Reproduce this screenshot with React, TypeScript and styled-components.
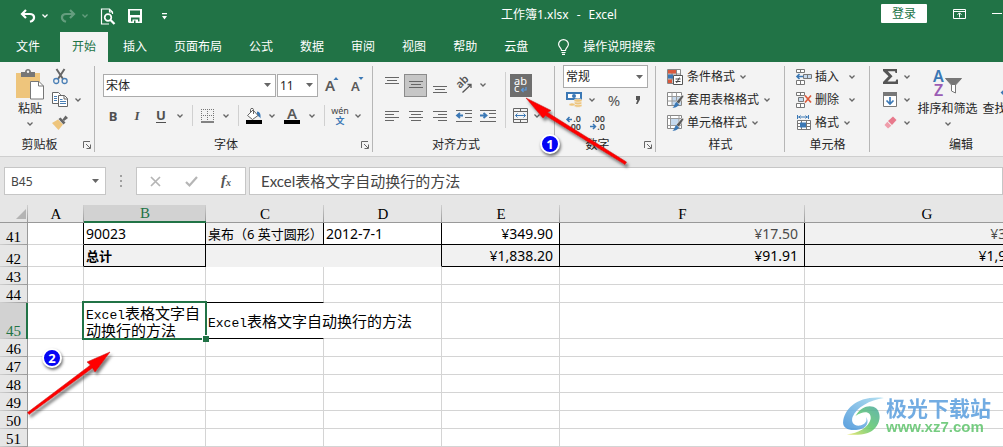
import React from "react";
import styled, { createGlobalStyle, css } from "styled-components";

const GREEN = "#217346";
const UI = `"Noto Sans", "Noto Sans CJK SC", sans-serif`;
const SONG = `"Liberation Serif", "Noto Sans CJK SC", serif`;

const GlobalStyle = createGlobalStyle`
  * { box-sizing: border-box; }
  body { margin: 0; background: #fff; font-family: ${UI}; font-size: 12px; color: #262626; }
  button, input, select { font: inherit; color: inherit; margin: 0; }
  svg { overflow: visible; }
`;

const Page = styled.main`
  position: relative;
  min-height: 100vh;
  overflow: hidden;
`;

/* ---------- title bar and tabs ---------- */

const TitleBar = styled.header`
  display: flex;
  align-items: center;
  height: 32px;
  background: ${GREEN};
  color: #fff;
`;

const QuickAccess = styled.div`
  display: flex;
  align-items: center;
  gap: 6px;
  flex: 0 0 501px;
  padding-left: 18px;
`;

const Split = styled.span`
  display: flex;
  align-items: center;
`;

const Btn = styled.button<{ $w?: number; $h?: number; $dim?: boolean }>`
  display: flex;
  flex: none;
  align-items: center;
  justify-content: center;
  width: ${(p) => p.$w ?? 24}px;
  height: ${(p) => p.$h ?? 22}px;
  padding: 0;
  border: 0;
  background: none;
  opacity: ${(p) => (p.$dim ? 0.3 : 1)};
`;

const Title = styled.h1`
  display: flex;
  gap: 8px;
  margin: 0;
  font-size: 12px;
  font-weight: 400;
  line-height: 30px;
  height: 32px;
  white-space: nowrap;
`;

const WindowTools = styled.div`
  display: flex;
  align-items: flex-start;
  height: 32px;
  padding-top: 4px;
  margin-left: auto;
`;

const SignIn = styled.button`
  width: 46px;
  height: 19px;
  padding: 0;
  border: 0;
  border-radius: 1px;
  background: #fff;
  color: ${GREEN};
  line-height: 19px;
`;

const Tabs = styled.nav`
  display: flex;
  gap: 3px;
  height: 30px;
  padding-left: 4px;
  background: ${GREEN};
`;

const Tab = styled.button<{ $active?: boolean; $file?: boolean }>`
  flex: none;
  padding: 0 12px;
  margin-right: ${(p) => (p.$file ? 5 : 0)}px;
  border: 0;
  background: ${(p) => (p.$active ? "#f3f3f3" : "none")};
  color: ${(p) => (p.$active ? GREEN : "#fff")};
  line-height: 28px;
  white-space: nowrap;
`;

const TellMe = styled.button`
  display: flex;
  align-items: center;
  gap: 14px;
  margin-left: 15px;
  padding: 0;
  border: 0;
  background: none;
  color: #fff;
  line-height: 28px;
  white-space: nowrap;
`;

/* ---------- ribbon ---------- */

const Ribbon = styled.section`
  display: flex;
  padding-top: 3px;
  background: #f3f3f3;
  border-bottom: 1px solid #cfcfcf;
  overflow: hidden;
`;

const GroupBox = styled.div<{ $w: number }>`
  display: flex;
  flex: none;
  flex-direction: column;
  width: ${(p) => p.$w}px;
  background: linear-gradient(#b6b6b6, #b6b6b6) right 0 top 1px / 1px calc(100% - 5px) no-repeat;
`;

const GroupBody = styled.div<{ $pad?: number }>`
  display: flex;
  height: 69px;
  padding-left: ${(p) => p.$pad ?? 0}px;
`;

const GroupFooter = styled.div`
  display: flex;
  align-items: center;
  height: 22px;
  line-height: 22px;
  white-space: nowrap;
`;

const GroupName = styled.span`
  flex: 1;
  text-align: center;
`;

const Stack = styled.div<{ $top?: number; $gap?: number }>`
  display: flex;
  flex-direction: column;
  gap: ${(p) => p.$gap ?? 0}px;
  padding-top: ${(p) => p.$top ?? 0}px;
`;

const Row = styled.div<{ $h?: number }>`
  display: flex;
  align-items: center;
  height: ${(p) => p.$h ?? 23}px;
`;

const FontRow = styled(Row)`
  height: 24px;
  padding-left: 2px;
  gap: 1px;
`;

const Divider = styled.span<{ $tall?: boolean }>`
  width: 10px;
  height: ${(p) => (p.$tall ? 56 : 21)}px;
  background: linear-gradient(#d0d0d0, #d0d0d0) center / 1px 100% no-repeat;
`;

const Tall = styled.button<{ $w: number }>`
  display: flex;
  flex: none;
  flex-direction: column;
  align-items: center;
  width: ${(p) => p.$w}px;
  height: 69px;
  padding: 4px 0 0;
  border: 0;
  background: none;
  line-height: 18px;
  white-space: nowrap;
`;

const TallIcon = styled.span`
  display: flex;
  height: 31px;
`;

const TallArrow = styled.span`
  display: flex;
  margin-top: 4px;
`;

const Toggle = styled(Btn)<{ $dark?: boolean }>`
  height: 23px;
  ${(p) =>
    p.$dark
      ? css`background: #6e6e6e;`
      : css`background: #c6c6c6; border: 1px solid #8b8b8b;`}
`;

const Command = styled.button`
  display: flex;
  align-items: center;
  gap: 3px;
  height: 23px;
  padding: 0;
  border: 0;
  background: none;
  line-height: 20px;
  white-space: nowrap;
`;

const CommandText = styled.span<{ $w?: number }>`
  min-width: ${(p) => p.$w ?? 0}px;
  margin-right: 2px;
  text-align: left;
`;

const ComboBox = styled.label<{ $w: number }>`
  display: grid;
  align-items: center;
  width: ${(p) => p.$w}px;
  height: 23px;
  border: 1px solid #ababab;
  background: #fff;
  > * { grid-area: 1 / 1; }
  > svg { justify-self: end; margin-right: 4px; pointer-events: none; }
`;

const Select = styled.select`
  width: 100%;
  height: 21px;
  padding: 0 2px;
  border: 0;
  background: none;
  appearance: none;
  outline: none;
`;

const Letter = styled.span<{ $italic?: boolean; $under?: boolean }>`
  font-size: 13px;
  font-weight: 700;
  line-height: 14px;
  color: #505050;
  font-style: ${(p) => (p.$italic ? "italic" : "normal")};
  font-family: ${(p) => (p.$italic ? `"Liberation Serif", serif` : UI)};
  border-bottom: ${(p) => (p.$under ? "1px solid #505050" : "0")};
`;

const BigGlyph = styled.span`
  font-size: 15px;
  line-height: 20px;
  color: #555;
`;

const EditTools = styled.div`
  display: flex;
  padding-left: 3px;
`;

const SideBtn = styled(Btn)`
  margin-left: -10px;
`;

/* ---------- formula bar ---------- */

const FormulaBar = styled.section`
  display: flex;
  align-items: center;
  height: 48px;
  padding: 0 0 0 4px;
  background: #e6e6e6;
`;

const Field = styled.div<{ $w?: number }>`
  display: flex;
  align-items: center;
  flex: ${(p) => (p.$w ? "none" : "1")};
  width: ${(p) => (p.$w ? p.$w + "px" : "auto")};
  height: 28px;
  border: 1px solid #c6c6c6;
  background: #fff;
`;

const TextInput = styled.input<{ $big?: boolean }>`
  flex: 1;
  min-width: 0;
  height: 26px;
  padding: 0 0 ${(p) => (p.$big ? 2 : 0)}px ${(p) => (p.$big ? 11 : 6)}px;
  border: 0;
  outline: 0;
  background: none;
  font-family: ${(p) => (p.$big ? `Lato, "Noto Sans CJK SC", sans-serif` : UI)};
  font-size: ${(p) => (p.$big ? 15 : 12)}px;
  color: #444;
`;

const Grip = styled.span`
  display: flex;
  justify-content: center;
  width: 30px;
`;

const FormulaGap = styled.span`
  width: 3px;
`;

/* ---------- sheet ---------- */

const SheetArea = styled.section`
  overflow: hidden;
`;

const Sheet = styled.table`
  width: 1049px;
  table-layout: fixed;
  border-collapse: separate;
  border-spacing: 0;
  color: #000;
`;

const ColHead = styled.th<{ $active?: boolean }>`
  height: 18px;
  padding: ${(p) => (p.$active ? 1 : 2)}px 0 0;
  border-bottom: ${(p) => (p.$active ? `2px solid ${GREEN}` : "1px solid #999")};
  background: linear-gradient(#cfcfcf, #999) right / 1px 100% no-repeat, ${(p) => (p.$active ? "#d2d2d2" : "#e6e6e6")};
  color: ${(p) => (p.$active ? GREEN : "#000")};
  font: 400 15px/15px ${SONG};
`;

const Corner = styled.th`
  padding: 0 2px 3px 0;
  border-bottom: 1px solid #999;
  background: linear-gradient(#cfcfcf, #999) right / 1px 100% no-repeat, #e6e6e6;
  vertical-align: bottom;
  svg { display: block; margin-left: auto; }
`;

const RowHead = styled.th<{ $h: number; $active?: boolean }>`
  height: ${(p) => p.$h}px;
  padding: 0 ${(p) => (p.$active ? 5 : 6)}px 0 0;
  border-right: ${(p) => (p.$active ? `2px solid ${GREEN}` : "1px solid #999")};
  background: linear-gradient(90deg, #cfcfcf, #999) bottom / 100% 1px no-repeat, ${(p) => (p.$active ? "#d2d2d2" : "#e6e6e6")};
  color: ${(p) => (p.$active ? GREEN : "#000")};
  font: 400 15px/15px ${SONG};
  text-align: right;
  vertical-align: bottom;
`;

type CellProps = { $fill?: boolean; $right?: string; $bottom?: string; $num?: boolean; $grey?: boolean };
const Cell = styled.td<CellProps>`
  position: relative;
  padding: 0 ${(p) => (p.$num ? 6 : 0)}px 0 2px;
  border-right: 1px solid ${(p) => p.$right ?? "#d4d4d4"};
  border-bottom: 1px solid ${(p) => p.$bottom ?? "#d4d4d4"};
  background: ${(p) => (p.$fill ? "#f1f1f1" : "#fff")};
  color: ${(p) => (p.$grey ? "#4a4a4a" : "#000")};
  font-size: 14px;
  line-height: 16px;
  text-align: ${(p) => (p.$num ? "right" : "left")};
  white-space: nowrap;
`;

const Cjk = styled.span<{ $bold?: boolean }>`
  font-size: 13px;
  font-weight: ${(p) => (p.$bold ? 700 : 400)};
`;

const SongText = styled.span<{ $wrap?: boolean }>`
  display: block;
  position: relative;
  z-index: 1;
  font: 15px/17px "Noto Sans CJK SC", sans-serif;
  white-space: ${(p) => (p.$wrap ? "normal" : "nowrap")};
`;

const Mono = styled.span`
  font-family: "Liberation Mono", monospace;
  font-size: 13px;
  line-height: 0;
`;

const Selection = styled.span`
  position: absolute;
  z-index: 2;
  inset: -2px;
  border: 2px solid ${GREEN};
  pointer-events: none;
  &::after {
    content: "";
    position: absolute;
    right: -4px;
    bottom: -4px;
    width: 6px;
    height: 6px;
    background: ${GREEN};
    border: solid #fff;
    border-width: 1px 0 0 1px;
  }
`;

const SelectedCell = styled(Cell)`
  z-index: 1;
`;

/* ---------- overlays ---------- */

const Marks = styled.svg`
  position: absolute;
  left: 0;
  top: 0;
  pointer-events: none;
`;

const Badge = styled.span<{ $x: number; $y: number }>`
  position: absolute;
  left: ${(p) => p.$x}px;
  top: ${(p) => p.$y}px;
  width: 20px;
  height: 20px;
  border: 2px solid #fff;
  border-radius: 50%;
  background: #0505f5;
  box-shadow: 1px 2px 3px rgba(0, 0, 0, 0.55);
  color: #fff;
  font: 700 13px/16px ${UI};
  text-align: center;
`;

const Watermark = styled.div`
  position: absolute;
  right: 12px;
  bottom: 8px;
  display: flex;
  align-items: center;
  opacity: 0.85;
`;

const WatermarkText = styled.div`
  color: #5a9ede;
  font: 700 21px/24px "Noto Sans CJK SC", sans-serif;
`;

const WatermarkUrl = styled.div`
  padding-bottom: 4px;
  color: #5fc46c;
  font: 700 15px/16px "Liberation Sans", sans-serif;
`;

/* ---------- icons ---------- */

const Chevron = ({ color = "#666" }: { color?: string }) => (
  <svg width="6" height="4" viewBox="0 0 6 4" fill="none" stroke={color} strokeWidth="1.3">
    <path d="M.5 .5 3 3 5.500 .5" />
  </svg>
);

const Caret = () => (
  <svg width="7" height="4" viewBox="0 0 7 4"><path d="M0 0h7L3.500 4z" fill="#666" /></svg>
);

const More = ({ w = 14, label, color, dim }: { w?: number; label: string; color?: string; dim?: boolean }) => (
  <Btn $w={w} $dim={dim} aria-label={label}><Chevron color={color} /></Btn>
);

const UndoIcon = () => (
  <svg width="16" height="14" viewBox="0 0 16 14" fill="none" stroke="#fff" strokeWidth="2.200">
    <path d="M6 1 2 5l4 4M2.500 5H10c5 0 5 5 2 7l-2 .7" />
  </svg>
);

const RedoIcon = () => (
  <svg width="16" height="14" viewBox="0 0 16 14" fill="none" stroke="#fff" strokeWidth="2.200">
    <path d="m10 1 4 4-4 4M13.500 5H6C1 5 1 10 4 12l2 .7" />
  </svg>
);

const PreviewIcon = () => (
  <svg width="16" height="17" viewBox="0 0 16 17" fill="none" stroke="#fff">
    <path d="M12.500 6V4L9.500 1H1.500v15H9M9.500 1v3h3" strokeWidth="1.2" />
    <circle cx="8" cy="9.500" r="3.300" strokeWidth="1.700" />
    <path d="m10.500 12 4 4" strokeWidth="2.300" />
  </svg>
);

const SaveIcon = () => (
  <svg width="14" height="14" viewBox="0 0 14 14">
    <path fillRule="evenodd" fill="#fff" d="M0 0h14v14H1L0 13zM2 1.500h10v4.500H2zM3 8.500h8.500v4H10V10.500H4.500v2H3zM6 11.500h1.500V14H6z" />
  </svg>
);

const CustomizeIcon = () => (
  <svg width="5" height="7" viewBox="0 0 5 7"><path d="M0 0h5v1.300H0zM0 3h5L2.500 6.500z" fill="#fff" /></svg>
);

const RibbonModeIcon = () => (
  <svg width="13" height="10" viewBox="0 0 13 10" fill="none" stroke="#fff">
    <path d="M.5 .5h12v9H.5zM.5 2.500h12M6.500 8.500V4M4.500 5.800l2-2 2 2" />
  </svg>
);

const MinimizeIcon = () => (
  <svg width="10" height="2" viewBox="0 0 10 2"><path d="M0 0h10v1H0z" fill="#fff" /></svg>
);

const BulbIcon = () => (
  <svg width="11" height="16" viewBox="0 0 11 16" fill="none" stroke="#fff" strokeWidth="1.200">
    <path d="M3.500 11.500c0-2.500-2.900-3.300-2.900-6.300a4.900 4.600 0 0 1 9.800 0c0 3-2.900 3.800-2.900 6.300zM3.500 13.500h4M4 15.300h3" />
  </svg>
);

const PasteIcon = () => (
  <svg width="28" height="31" viewBox="0 0 28 31">
    <path d="M0 4h24v25H0z" fill="#eec57c" />
    <path d="M5 3h4c0-4 6-4 6 0h4v5H5z" fill="#767676" />
    <circle cx="12" cy="2.800" r="1.200" fill="#f3f3f3" />
    <path d="M14.500 12.500h8.500l4.500 4.500v13h-13z" fill="#fff" stroke="#777" />
    <path d="M22.500 12.500V17h5" fill="none" stroke="#777" />
  </svg>
);

const CutIcon = () => (
  <svg width="15" height="16" viewBox="0 0 15 16" fill="none">
    <path d="M3.500 0 10 10M11.500 0 5 10" stroke="#666" strokeWidth="2" />
    <circle cx="3.200" cy="12" r="2.500" stroke="#4a7fb5" strokeWidth="1.300" />
    <circle cx="11.600" cy="12" r="2.500" stroke="#4a7fb5" strokeWidth="1.300" />
  </svg>
);

const CopyIcon = () => (
  <svg width="16" height="15" viewBox="0 0 16 15" stroke="#666" fill="#fff">
    <path d="M.5 .5h6l2 2v9h-8z" />
    <path d="M6.500 3.500h6l3 3v8h-9z" />
    <path d="M12 3.500V7h3.500" fill="none" />
    <path d="M2 4.500h3M2 6.500h3M2 8.500h3M8 7.500h2.500M8 9.500h6M8 11.500h6" stroke="#4a7fb5" />
  </svg>
);

const BrushIcon = () => (
  <svg width="16" height="15" viewBox="0 0 16 15">
    <path d="M0 8 6 4.500l5 5L6.500 15z" fill="#eec57c" />
    <path d="m6.500 4 2-1.500 5 5-2 2z" fill="#666" />
    <path d="m10.500 4.500 3-4L16 3l-4 3z" fill="#666" />
  </svg>
);

const LauncherIcon = () => (
  <svg width="8" height="8" viewBox="0 0 8 8" fill="none" stroke="#666">
    <path d="M.5 7V.5H7M3 3l4 4M7.500 3.500v4h-4" />
  </svg>
);

const FontSizeIcon = ({ down }: { down?: boolean }) => (
  <svg width="15" height="16" viewBox="0 0 15 16">
    <text x="0" y="14" fontFamily="Noto Sans" fontSize={down ? 13 : 15} fontWeight="600" fill="#595959">A</text>
    <path d={down ? "M7.500 0h5L10 3z" : "M8.500 3h5L11 0z"} fill="#3b78b5" />
  </svg>
);

const BorderIcon = () => (
  <svg width="14" height="14" viewBox="0 0 14 14" fill="none" stroke="#777">
    <path d="M0 .5h13M.5 0v12M6.500 0v12M12.500 0v12M0 6.500h13" strokeDasharray="1 1" />
    <path d="M0 13h13" stroke="#444" strokeWidth="1.300" />
  </svg>
);

const FillIcon = () => (
  <svg width="16" height="16" viewBox="0 0 16 16">
    <path d="M11 3.500c3 0 4 3 3.500 7-1-2-2.500-2.500-3.500-3z" fill="#3b78b5" />
    <path d="M1.500 7.500 7 2l5 5.500-5.500 4z" fill="#fff" stroke="#666" />
    <path d="M4.500 5V1.500c0-1.500 3-1.500 3 0V6" fill="none" stroke="#666" />
    <path d="M0 12h16v4H0z" />
  </svg>
);

const FontColorIcon = () => (
  <svg width="16" height="16" viewBox="0 0 16 16">
    <text x="8" y="11" textAnchor="middle" fontFamily="Noto Sans" fontSize="15" fontWeight="600" fill="#595959">A</text>
    <path d="M0 12h16v4H0z" />
  </svg>
);

const PhoneticIcon = () => (
  <svg width="18" height="18" viewBox="0 0 18 18">
    <text x="9" y="7" textAnchor="middle" fontFamily="Noto Sans" fontSize="9" fill="#444">wén</text>
    <text x="9" y="17" textAnchor="middle" fontFamily="Noto Sans CJK SC" fontSize="9" fontWeight="700" fill="#3b78b5">文</text>
  </svg>
);

const Lines = ({ rows, top = 0 }: { rows: [number, number][]; top?: number }) => (
  <svg width="14" height="18" viewBox="0 0 14 18" stroke="#666">
    {rows.map(([x, w], i) => <path key={i} d={`M${x} ${top + i * 3 + 0.5}h${w}`} />)}
  </svg>
);

const IndentIcon = ({ right }: { right?: boolean }) => (
  <svg width="16" height="14" viewBox="0 0 16 14" fill="none" stroke="#666">
    <path d="M0 1.500h16M9 4.500h7M9 8.500h7M0 12.500h16" />
    <path d={right ? "M0 6.500h6M3.500 4l3 2.500-3 2.500" : "M7 6.500H1M4 4 1 6.500 4 9"} stroke="#3b78b5" strokeWidth="1.800" />
  </svg>
);

const OrientationIcon = () => (
  <svg width="17" height="17" viewBox="0 0 17 17">
    <text x="4" y="12" transform="rotate(-45 4 12)" fontFamily="Noto Sans" fontSize="11" fontWeight="600" fill="#555">ab</text>
    <path d="M6.500 15.500 15 7.500M11.500 7.500H15V11" fill="none" stroke="#555" strokeWidth="1.300" />
  </svg>
);

const WrapIcon = () => (
  <svg width="22" height="22" viewBox="0 0 22 22">
    <text x="4" y="11" fontFamily="Noto Sans" fontSize="11" fill="#fff">ab</text>
    <text x="4" y="18" fontFamily="Noto Sans" fontSize="11" fill="#fff">c</text>
    <path d="M16 13v3h-4M13.500 14l-2 2 2 2" fill="none" stroke="#5b9be0" strokeWidth="1.200" />
  </svg>
);

const MergeIcon = () => (
  <svg width="15" height="15" viewBox="0 0 15 15" fill="none" stroke="#666">
    <path d="M.5 .5h14v14H.5zM.5 3.500h14M.5 11.500h14M7.500 .5v3M7.500 11.500v3" />
    <path d="M2.500 7.500h10M4.500 5.500l-2 2 2 2M10.500 5.500l2 2-2 2" stroke="#3b78b5" />
  </svg>
);

const CurrencyIcon = () => (
  <svg width="17" height="16" viewBox="0 0 17 16">
    <path d="M0 0h16v8H0z" fill="#3b78b5" />
    <path d="M2 2h12v4H2z" fill="#fff" /><circle cx="8" cy="4" r="2" fill="#3b78b5" />
    <g fill="#eec57c" stroke="#f3f3f3" strokeWidth=".6">
      <ellipse cx="12" cy="13.500" rx="4" ry="1.800" /><ellipse cx="12" cy="11" rx="4" ry="1.800" />
      <ellipse cx="12" cy="8.500" rx="4" ry="1.800" /><ellipse cx="6" cy="12.500" rx="3" ry="1.600" />
    </g>
  </svg>
);

const DecimalIcon = ({ more }: { more?: boolean }) => (
  <svg width="17" height="16" viewBox="0 0 17 16" fontFamily="Noto Sans" fontSize="9" fontWeight="600" fill="#444">
    <text x="15" y="7" textAnchor="end">{more ? ".00" : ".0"}</text>
    <text x="15" y="15" textAnchor="end">{more ? ".0" : ".00"}</text>
    <path d={more ? "M0 11.500h5M3 9l2.500 2.500L3 14" : "M6 4.500H1M3.500 2 1 4.500 3.500 7"} fill="none" stroke="#3b78b5" strokeWidth="1.500" />
  </svg>
);

const CommaIcon = () => (
  <svg width="6" height="8" viewBox="0 0 6 8"><path d="M1 0h4v3.500L2.500 8H1l1.300-4H1z" fill="#555" /></svg>
);

const ConditionalIcon = () => (
  <svg width="17" height="16" viewBox="0 0 17 16" fill="none">
    <path d="M.5 .5h13v14H.5zM.5 5h13M.5 10h13M5 .5v14M9.500 .5v14" fill="#fff" stroke="#888" />
    <path d="M1 1h8v3.500H1zM1 10.500h4V14H1z" fill="#d9593d" />
    <path d="M1 5.500h5v4H1z" fill="#3b78b5" />
    <path d="M6.500 6.500h9v9h-9z" fill="#fff" stroke="#555" />
    <path d="M8.500 10h5M8.500 12.500h5M12.500 8.500l-3 5.500" stroke="#444" />
  </svg>
);

const StyleIcon = ({ table }: { table?: boolean }) => (
  <svg width="17" height="16" viewBox="0 0 17 16">
    <path d="M.5 .5h14v13H.5z" fill="#fff" stroke="#888" />
    <path d={table ? "M5 5h9v8H5z" : "M4 4h8v6H4z"} fill="#c5d9ee" />
    <path d={table ? "M.5 4.500h14M.5 9h14M5 .5v13M9.500 .5v13" : "M.5 3.500h14M.5 10.500h14M3.500 .5v13M12 .5v13"} fill="none" stroke="#999" />
    <path d="m9 10 6-7 2 1-5 8z" fill="#5a5a5a" stroke="#f3f3f3" strokeWidth=".6" />
    <path d="M5 15.500c3-.5 2-4 4.500-5.500l2.500 2.500C11 15 8 16 5 15.500z" fill="#3b78b5" />
  </svg>
);

const CellsIcon = ({ kind }: { kind: "insert" | "delete" | "format" }) =>
  kind === "format" ? (
    <svg width="16" height="16" viewBox="0 0 16 16" fill="none">
      <path d="M1.500 5.500h13v9h-13zM1.500 8.500h13M1.500 11.500h13M5.500 5.500v9M10.500 5.500v9" fill="#fff" stroke="#777" />
      <path d="M4 7.500h6v5H4z" fill="#3b78b5" />
      <path d="M1.500 0v4M12.500 0v4M2 2h10M4.500 .5 3 2l1.500 1.500M9.500 .5 11 2 9.500 3.500" stroke="#3b78b5" />
    </svg>
  ) : (
    <svg width="16" height="16" viewBox="0 0 16 16" fill="none">
      <path d="M.5 .5h8v3h-8zM4.500 .5v3M.5 11.500h8v4h-8zM4.500 11.500v4" fill="#fff" stroke="#777" />
      {kind === "insert" ? (
        <>
          <path d="M7.500 5.500h8v4h-8zM11.500 5.500v4" fill="#c5d9ee" stroke="#777" />
          <path d="M7 7.500H1M3.500 5 1 7.500 3.500 10" stroke="#3b78b5" strokeWidth="1.600" />
        </>
      ) : (
        <>
          <path d="M2.500 5.500h5v4h-5z" fill="#c5d9ee" stroke="#777" />
          <path d="m9 3.500 6 7M15 3.500l-6 7" stroke="#dd5b3c" strokeWidth="1.700" />
        </>
      )}
    </svg>
  );

const SumIcon = () => (
  <svg width="15" height="15" viewBox="0 0 15 15">
    <path d="M0 0h14v4h-1.500L12 2.300H4.800L9.500 7.200 4.500 12.500h8l.8-2H15V15H0v-2l5.500-5.700L0 2z" fill="#555" />
  </svg>
);

const FillDownIcon = () => (
  <svg width="14" height="15" viewBox="0 0 14 15" fill="none">
    <path d="M.5 .5h13v14H.5z" fill="#fff" stroke="#777" />
    <path d="M0 0h14v4H0z" fill="#777" />
    <path d="M7 5v7M3.500 8.500 7 12l3.500-3.500" stroke="#3b78b5" strokeWidth="1.700" />
  </svg>
);

const EraserIcon = () => (
  <svg width="13" height="13" viewBox="0 0 13 13">
    <path d="M4 5 9 .5 12.500 4 8 9z" fill="#e8798c" /><path d="M3.300 5.700 7.300 9.700 4 12.500 .5 9z" fill="#ef9dab" />
  </svg>
);

const SortIcon = () => (
  <svg width="30" height="29" viewBox="0 0 30 29">
    <text x="0" y="13" fontFamily="Noto Sans" fontSize="16" fontWeight="600" fill="#3b78b5">A</text>
    <text x="1" y="27" fontFamily="Noto Sans" fontSize="16" fontWeight="600" fill="#9a5cb4">Z</text>
    <path d="M12.500 9.500h16l-6 6.500v8l-4-2v-6z" fill="#fff" stroke="#777" />
    <path d="M12.500 9.500h16l-6 6.500h-4z" fill="#777" />
  </svg>
);

const FindIcon = () => (
  <svg width="28" height="29" viewBox="0 0 28 29" fill="none" stroke="#3b78b5">
    <circle cx="17" cy="11" r="7.500" strokeWidth="2" /><path d="m11 17-8 8" strokeWidth="4" />
  </svg>
);

const FxIcon = () => (
  <svg width="14" height="16" viewBox="0 0 14 16" fill="#555" fontFamily="Liberation Serif" fontStyle="italic">
    <text x="1" y="12" fontSize="15" fontWeight="700">f</text>
    <text x="6" y="13" fontSize="10" fontWeight="700">x</text>
  </svg>
);

const WatermarkLogo = () => (
  <svg width="44" height="40" viewBox="0 0 44 42">
    <defs>
      <linearGradient id="swooshBlue" x1="0" y1="1" x2="1" y2="0">
        <stop offset="0" stopColor="#3f8fd8" /><stop offset="1" stopColor="#a8dcf0" />
      </linearGradient>
      <linearGradient id="swooshGreen" x1="0" y1="1" x2="1" y2="0">
        <stop offset="0" stopColor="#e8e45c" /><stop offset=".5" stopColor="#5cc66c" /><stop offset="1" stopColor="#4aa8a0" />
      </linearGradient>
    </defs>
    <path d="M0 27C1 12 16-2 43 1 28 3 14 11 10 21c-2 6 2 10 8 9 5-1 8-5 6-9 4 5 1 12-7 13C7 36 0 33 0 27z" fill="url(#swooshBlue)" />
    <path d="M13 20C20 8 30 8 35 12c7 7 3 22-10 26-7 2-14 2-21 1 12-1 23-7 25-16 1-7-6-10-16-3z" fill="url(#swooshGreen)" />
  </svg>
);

/* ---------- composed parts ---------- */

const Group = ({ name, w, pad, launcher, children }: { name: string; w: number; pad?: number; launcher?: boolean; children: React.ReactNode }) => (
  <GroupBox $w={w}>
    <GroupBody $pad={pad}>{children}</GroupBody>
    <GroupFooter>
      <GroupName>{name}</GroupName>
      {launcher && <Btn $w={16} $h={16} aria-label={`${name}设置`}><LauncherIcon /></Btn>}
    </GroupFooter>
  </GroupBox>
);

const Combo = ({ label, value, w }: { label: string; value: string; w: number }) => (
  <ComboBox $w={w}>
    <Select aria-label={label} defaultValue={value}><option>{value}</option></Select>
    <Caret />
  </ComboBox>
);

const Cmd = ({ icon, text, w }: { icon: React.ReactNode; text: string; w?: number }) => (
  <Command>{icon}<CommandText $w={w}>{text}</CommandText><Chevron /></Command>
);

const tabs = ["文件", "开始", "插入", "页面布局", "公式", "数据", "审阅", "视图", "帮助", "云盘"];
const columns = [
  ["A", 56], ["B", 122], ["C", 118], ["D", 118], ["E", 118], ["F", 245], ["G", 244],
] as const;
const emptyRows = [46, 47, 48, 49, 50, 51];
const K = "#000";

const EmptyRow = ({ n, bottoms = {} }: { n: number; bottoms?: Record<string, string> }) => (
  <tr>
    <RowHead $h={18} scope="row">{n}</RowHead>
    {columns.map(([c]) => <Cell key={c} $bottom={bottoms[c]} />)}
  </tr>
);

export default function App() {
  return (
    <Page>
      <GlobalStyle />
      <TitleBar>
        <QuickAccess>
          <Split><Btn $w={20} aria-label="撤消"><UndoIcon /></Btn><More label="撤消选项" color="#fff" /></Split>
          <Split><Btn $w={20} $dim aria-label="恢复"><RedoIcon /></Btn><More label="恢复选项" color="#fff" dim /></Split>
          <Btn $w={20} aria-label="打印预览"><PreviewIcon /></Btn>
          <Btn $w={22} aria-label="保存"><SaveIcon /></Btn>
          <Btn $w={24} aria-label="自定义快速访问工具栏"><CustomizeIcon /></Btn>
        </QuickAccess>
        <Title><span>工作簿1.xlsx</span><span>-</span><span>Excel</span></Title>
        <WindowTools>
          <SignIn>登录</SignIn>
          <Btn $w={64} $h={19} aria-label="功能区显示选项"><RibbonModeIcon /></Btn>
          <Btn $w={12} $h={19} aria-label="最小化"><MinimizeIcon /></Btn>
        </WindowTools>
      </TitleBar>
      <Tabs>
        {tabs.map((t, i) => <Tab key={t} $file={i === 0} $active={i === 1}>{t}</Tab>)}
        <TellMe><BulbIcon />操作说明搜索</TellMe>
      </Tabs>

      <Ribbon>
        <Group name="剪贴板" w={95} launcher>
          <Tall $w={60}>
            <TallIcon><PasteIcon /></TallIcon>
            <span>粘贴</span>
            <TallArrow><Chevron /></TallArrow>
          </Tall>
          <Stack>
            <Row><SideBtn $w={20} aria-label="剪切"><CutIcon /></SideBtn></Row>
            <Row>
              <SideBtn $w={20} aria-label="复制"><CopyIcon /></SideBtn>
              <More label="复制选项" w={16} />
            </Row>
            <Row><SideBtn $w={20} aria-label="格式刷"><BrushIcon /></SideBtn></Row>
          </Stack>
        </Group>

        <Group name="字体" w={278} pad={6} launcher>
          <Stack $top={8} $gap={7}>
            <FontRow>
              <Combo label="字体" value="宋体" w={173} />
              <Combo label="字号" value="11" w={41} />
              <Btn $w={26} aria-label="增大字号"><FontSizeIcon /></Btn>
              <Btn $w={24} aria-label="减小字号"><FontSizeIcon down /></Btn>
            </FontRow>
            <Row>
              <Btn aria-label="加粗"><Letter>B</Letter></Btn>
              <Btn aria-label="倾斜"><Letter $italic>I</Letter></Btn>
              <Btn aria-label="下划线"><Letter $under>U</Letter></Btn>
              <More label="下划线选项" />
              <Divider />
              <Btn $w={22} aria-label="边框"><BorderIcon /></Btn><More label="边框选项" />
              <Divider />
              <Btn $w={22} aria-label="填充颜色"><FillIcon /></Btn><More label="填充颜色选项" />
              <Btn $w={26} aria-label="字体颜色"><FontColorIcon /></Btn><More label="字体颜色选项" />
              <Divider />
              <Btn $w={22} aria-label="拼音"><PhoneticIcon /></Btn><More label="拼音选项" />
            </Row>
          </Stack>
        </Group>

        <Group name="对齐方式" w={182} pad={7} launcher>
          <Stack $top={8} $gap={7}>
            <Row $h={24}>
              <Btn aria-label="顶端对齐"><Lines rows={[[0, 14], [2, 10], [0, 14]]} top={1} /></Btn>
              <Toggle $w={23} aria-label="垂直居中"><Lines rows={[[0, 14], [2, 10], [0, 14]]} top={5} /></Toggle>
              <Btn $w={25} aria-label="底端对齐"><Lines rows={[[0, 14], [2, 10], [0, 14]]} top={10} /></Btn>
              <Btn aria-label="方向"><OrientationIcon /></Btn>
              <More label="方向选项" />
            </Row>
            <Row>
              <Btn aria-label="左对齐"><Lines rows={[[0, 14], [0, 9], [0, 14], [0, 9]]} top={4} /></Btn>
              <Btn aria-label="居中"><Lines rows={[[0, 14], [2, 10], [0, 14], [2, 10]]} top={4} /></Btn>
              <Btn aria-label="右对齐"><Lines rows={[[0, 14], [5, 9], [0, 14], [5, 9]]} top={4} /></Btn>
              <Btn aria-label="减少缩进量"><IndentIcon /></Btn>
              <Btn aria-label="增加缩进量"><IndentIcon right /></Btn>
            </Row>
          </Stack>
          <Stack $top={7}><Divider $tall /></Stack>
          <Stack $top={8} $gap={7}>
            <Row $h={24}><Toggle $dark $w={22} aria-label="自动换行"><WrapIcon /></Toggle></Row>
            <Row><Btn $w={20} aria-label="合并后居中"><MergeIcon /></Btn><More label="合并选项" /></Row>
          </Stack>
        </Group>

        <Group name="数字" w={101} pad={8} launcher>
          <Stack>
            <Combo label="数字格式" value="常规" w={85} />
            <Row>
              <Btn $w={22} aria-label="会计数字格式"><CurrencyIcon /></Btn><More label="货币选项" />
              <Btn $w={30} aria-label="百分比样式"><BigGlyph>%</BigGlyph></Btn>
              <Btn $w={18} aria-label="千位分隔样式"><CommaIcon /></Btn>
            </Row>
            <Row>
              <Btn $w={23} aria-label="增加小数位数"><DecimalIcon /></Btn>
              <Btn $w={24} aria-label="减少小数位数"><DecimalIcon more /></Btn>
            </Row>
          </Stack>
        </Group>

        <Group name="样式" w={129} pad={11}>
          <Stack>
            <Cmd icon={<ConditionalIcon />} text="条件格式" />
            <Cmd icon={<StyleIcon table />} text="套用表格格式" />
            <Cmd icon={<StyleIcon />} text="单元格样式" />
          </Stack>
        </Group>

        <Group name="单元格" w={85} pad={11}>
          <Stack>
            <Cmd icon={<CellsIcon kind="insert" />} text="插入" w={29} />
            <Cmd icon={<CellsIcon kind="delete" />} text="删除" w={29} />
            <Cmd icon={<CellsIcon kind="format" />} text="格式" />
          </Stack>
        </Group>

        <Group name="编辑" w={182} pad={8}>
          <Stack>
            <Row><Btn aria-label="自动求和"><SumIcon /></Btn><More label="求和选项" w={10} /></Row>
            <Row><Btn aria-label="填充"><FillDownIcon /></Btn><More label="填充选项" w={10} /></Row>
            <Row><Btn aria-label="清除"><EraserIcon /></Btn><More label="清除选项" w={10} /></Row>
          </Stack>
          <EditTools>
            <Tall $w={65}>
              <TallIcon><SortIcon /></TallIcon>
              <span>排序和筛选</span>
              <TallArrow><Chevron /></TallArrow>
            </Tall>
            <Tall $w={65}>
              <TallIcon><FindIcon /></TallIcon>
              <span>查找和选择</span>
              <TallArrow><Chevron /></TallArrow>
            </Tall>
          </EditTools>
        </Group>
      </Ribbon>

      <FormulaBar>
        <Field $w={102}>
          <TextInput aria-label="名称框" defaultValue="B45" />
          <Btn $w={20} aria-label="名称列表"><Caret /></Btn>
        </Field>
        <Grip>
          <svg width="2" height="12" viewBox="0 0 2 12" fill="#a0a0a0"><path d="M0 0h2v2H0zM0 5h2v2H0zM0 10h2v2H0z" /></svg>
        </Grip>
        <Field $w={110}>
          <Btn $w={36} aria-label="取消">
            <svg width="11" height="11" viewBox="0 0 11 11" stroke="#b5b5b5" strokeWidth="1.700"><path d="m1 1 9 9M10 1l-9 9" /></svg>
          </Btn>
          <Btn $w={36} aria-label="输入">
            <svg width="13" height="11" viewBox="0 0 13 11" fill="none" stroke="#b5b5b5" strokeWidth="2.200"><path d="m1 6 3.500 3.500L12 1" /></svg>
          </Btn>
          <Btn $w={36} aria-label="插入函数"><FxIcon /></Btn>
        </Field>
        <FormulaGap />
        <Field><TextInput $big aria-label="编辑栏" defaultValue="Excel表格文字自动换行的方法" /></Field>
      </FormulaBar>

      <SheetArea>
        <Sheet>
          <colgroup>
            <col width={28} />
            {columns.map(([c, w]) => <col key={c} width={w} />)}
          </colgroup>
          <thead>
            <tr>
              <Corner aria-label="全选"><svg width="10" height="10" viewBox="0 0 10 10"><path d="M10 0v10H0z" fill="#b4b4b4" /></svg></Corner>
              {columns.map(([c]) => <ColHead key={c} scope="col" $active={c === "B"}>{c}</ColHead>)}
            </tr>
          </thead>
          <tbody>
            <tr>
              <RowHead $h={22} scope="row">41</RowHead>
              <Cell $right={K} />
              <Cell $right={K} $bottom={K}>90023</Cell>
              <Cell $right={K} $bottom={K} $fill><Cjk>桌布（6 英寸圆形）</Cjk></Cell>
              <Cell $right={K} $bottom={K}>2012-7-1</Cell>
              <Cell $right={K} $bottom={K} $num>¥349.90</Cell>
              <Cell $right={K} $bottom={K} $num $fill $grey>¥17.50</Cell>
              <Cell $right={K} $bottom={K} $num $fill $grey>¥332.40</Cell>
            </tr>
            <tr>
              <RowHead $h={22} scope="row">42</RowHead>
              <Cell $right={K} />
              <Cell $right={K} $bottom={K} $fill><Cjk $bold>总计</Cjk></Cell>
              <Cell $right="#f1f1f1" $bottom="#f1f1f1" $fill />
              <Cell $right={K} $bottom="#f1f1f1" $fill />
              <Cell $right={K} $bottom={K} $num $fill>¥1,838.20</Cell>
              <Cell $right={K} $bottom={K} $num $fill>¥91.91</Cell>
              <Cell $right={K} $bottom={K} $num $fill>¥1,930.11</Cell>
            </tr>
            <EmptyRow n={43} />
            <EmptyRow n={44} bottoms={{ C: K }} />
            <tr>
              <RowHead $h={36} $active scope="row">45</RowHead>
              <Cell />
              <SelectedCell>
                <Selection />
                <SongText $wrap><Mono>Excel</Mono>表格文字自动换行的方法</SongText>
              </SelectedCell>
              <Cell $right="#fff" $bottom={K}>
                <SongText><Mono>Excel</Mono>表格文字自动换行的方法</SongText>
              </Cell>
              <Cell /><Cell /><Cell /><Cell />
            </tr>
            {emptyRows.map((n) => <EmptyRow key={n} n={n} />)}
          </tbody>
        </Sheet>
      </SheetArea>

      <Marks width="640" height="430" viewBox="0 0 640 430" aria-hidden="true">
        <defs>
          <filter id="soft" x="-20%" y="-20%" width="140%" height="140%">
            <feDropShadow dx="2" dy="3" stdDeviation="1.500" floodOpacity=".5" />
          </filter>
        </defs>
        <g fill="#ff0505" stroke="#c01010" strokeWidth=".5" filter="url(#soft)">
          <path d="M526 98 551 110.500 547.500 112.500 626.500 162 625 164.500 545.500 115.500 543 118z" />
          <path d="M110 352 95 372 92.500 368 29 414.500 27.500 412.500 90.500 365 87 362z" />
        </g>
      </Marks>
      <Badge $x={540} $y={134}>1</Badge>
      <Badge $x={42} $y={348}>2</Badge>

      <Watermark>
        <WatermarkLogo />
        <div>
          <WatermarkText>极光下载站</WatermarkText>
          <WatermarkUrl>www.xz7.com</WatermarkUrl>
        </div>
      </Watermark>
    </Page>
  );
}
